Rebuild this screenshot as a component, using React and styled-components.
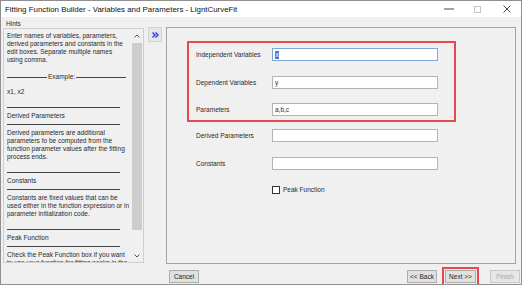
import React from 'react';
import styled, { createGlobalStyle } from 'styled-components';

const Global = createGlobalStyle`
  html, body { margin: 0; padding: 0; background: #fff; }
  body { font-family: "Liberation Sans", Arial, sans-serif; }
  * { box-sizing: border-box; }
`;

const FS = 6.5;

const Window = styled.div`
  width: 522px;
  height: 285px;
  border: 1px solid #8f8f8f;
  background: #f0f0f0;
  display: flex;
  flex-direction: column;
  overflow: hidden;
  color: #2a2a2a;
`;

const TitleBar = styled.div`
  height: 16px;
  flex: none;
  background: #fff;
  display: flex;
  align-items: center;
  padding-left: 4px;
`;

const Title = styled.div`
  flex: 1;
  font-size: 7.9px;
  white-space: nowrap;
  color: #111;
`;

const Controls = styled.div`
  display: flex;
  height: 100%;
`;

const Ctrl = styled.div`
  width: 29px;
  height: 100%;
  display: flex;
  align-items: center;
  justify-content: center;
`;

const Main = styled.div`
  flex: 1;
  min-height: 0;
  display: flex;
  align-items: flex-start;
  padding-left: 2px;
`;

const HintsCol = styled.div`
  width: 141px;
  display: flex;
  flex-direction: column;
`;

const HintsLabel = styled.div`
  height: 11px;
  padding: 2px 0 0 3px;
  font-size: ${FS}px;
  line-height: 10px;
`;

const HintsPanel = styled.div`
  height: 235px;
  border: 1px solid #cfcfcf;
  display: flex;
`;

const HintsText = styled.div`
  flex: 1;
  min-width: 0;
  overflow: hidden;
  padding: 3px 0 0 3px;
  font-size: ${FS}px;
  line-height: 8px;
`;

const Line = styled.div`
  white-space: nowrap;
  height: 8px;
`;

const Para = styled.div`
  margin-top: ${p => p.$mt || 0}px;
`;

const Sep = styled.div`
  width: 113px;
  height: 1px;
  background: #444;
  margin-top: ${p => p.$mt || 0}px;
`;

const ExampleRow = styled.div`
  display: flex;
  align-items: center;
  height: 8px;
  margin-top: 9px;
  white-space: nowrap;
`;

const ExampleRule = styled.div`
  width: ${p => p.$w}px;
  height: 1px;
  background: #444;
`;

const ExampleText = styled.span`
  padding: 0 1px 0 1px;
`;

const ScrollBar = styled.div`
  width: 13px;
  display: flex;
  flex-direction: column;
`;

const ScrollArrow = styled.div`
  height: 13px;
  display: flex;
  align-items: center;
  justify-content: center;
  padding-left: 1px;
`;

const ScrollTrack = styled.div`
  flex: 1;
  padding: 1px 1px 0 2px;
`;

const Thumb = styled.div`
  height: 187px;
  background: #cdcdcd;
`;

const ExpandButton = styled.div`
  margin: 10px 0 0 4px;
  width: 14px;
  height: 15px;
  background: #e6e6e6;
  border: 1px solid #d2d2d2;
  display: flex;
  align-items: center;
  justify-content: center;
`;

const RightPanel = styled.div`
  margin: 10px 0 0 4px;
  width: 350px;
  height: 237px;
  border: 1px solid #a3a3a3;
  padding: 13px 0 0 20px;
`;

const RedBox = styled.div`
  width: 269px;
  height: 81px;
  border: 2px solid #ea4850;
  padding: 5px 0 0 7px;
  display: flex;
  flex-direction: column;
  gap: 14.5px;
`;

const Rows = styled.div`
  padding-left: 9px;
  margin-top: 7px;
  display: flex;
  flex-direction: column;
  gap: 15px;
`;

const Row = styled.div`
  display: flex;
  align-items: center;
  height: 13px;
  font-size: ${FS}px;
`;

const Label = styled.div`
  width: 76px;
  white-space: nowrap;
`;

const Field = styled.div`
  width: 166px;
  height: 13px;
  background: #fff;
  border: 1px solid ${p => (p.$focus ? '#7ea8d8' : '#b4b4b4')};
  display: flex;
  align-items: center;
  padding-left: 2px;
  font-size: ${FS}px;
  white-space: nowrap;
`;

const Selected = styled.span`
  background: #3b7fd4;
  color: #fff;
  padding: 0 0.5px;
  line-height: 8px;
`;

const CheckRow = styled.div`
  display: flex;
  align-items: center;
  height: 9px;
  padding-left: 76px;
  font-size: ${FS}px;
`;

const CheckBox = styled.div`
  width: 8px;
  height: 8px;
  background: #fff;
  border: 1px solid #333;
  margin-right: 3px;
`;

const BottomRow = styled.div`
  height: 20px;
  flex: none;
  display: flex;
  align-items: flex-start;
  padding: 6px 1px 0 168px;
`;

const Spacer = styled.div`
  flex: 1;
`;

const Button = styled.button`
  width: ${p => p.$w || 30}px;
  height: 13px;
  margin-left: ${p => p.$ml || 0}px;
  padding: 0;
  border: 1px solid ${p => (p.disabled ? '#c9c9c9' : '#adadad')};
  background: ${p => (p.disabled ? '#e6e6e6' : '#e1e1e1')};
  color: ${p => (p.disabled ? '#a8a8a8' : '#1e1e1e')};
  font-family: inherit;
  font-size: ${FS}px;
  white-space: nowrap;
  outline: ${p => (p.$highlight ? '2px solid #ea4850' : 'none')};
  outline-offset: 1px;
`;

const Chevron = ({ up }) => (
  <svg width="6" height="4" viewBox="0 0 6 4">
    <polyline
      points={up ? '0.5,3.5 3,1 5.5,3.5' : '0.5,0.5 3,3 5.5,0.5'}
      fill="none"
      stroke="#555"
      strokeWidth="1"
    />
  </svg>
);

const Section = ({ title, lines }) => (
  <>
    <Sep $mt={11} />
    <Para $mt={4}>
      <Line>{title}</Line>
    </Para>
    <Sep $mt={4} />
    <Para $mt={4}>
      {lines.map(l => (
        <Line key={l}>{l}</Line>
      ))}
    </Para>
  </>
);

export default function App() {
  return (
    <>
      <Global />
      <Window>
        <TitleBar>
          <Title>Fitting Function Builder - Variables and Parameters - LigntCurveFit</Title>
          <Controls>
            <Ctrl>
              <svg width="10" height="2" viewBox="0 0 10 2">
                <line x1="0" y1="1" x2="10" y2="1" stroke="#444" strokeWidth="1" />
              </svg>
            </Ctrl>
            <Ctrl>
              <svg width="7" height="7" viewBox="0 0 7 7">
                <rect x="0.5" y="0.5" width="6" height="6" fill="none" stroke="#c4c4c4" strokeWidth="1" />
              </svg>
            </Ctrl>
            <Ctrl>
              <svg width="8" height="8" viewBox="0 0 8 8">
                <path d="M0.5 0.5 L7.5 7.5 M7.5 0.5 L0.5 7.5" stroke="#333" strokeWidth="0.9" fill="none" />
              </svg>
            </Ctrl>
          </Controls>
        </TitleBar>

        <Main>
          <HintsCol>
            <HintsLabel>Hints</HintsLabel>
            <HintsPanel>
              <HintsText>
                <Para>
                  <Line>Enter names of variables, parameters,</Line>
                  <Line>derived parameters and constants in the</Line>
                  <Line>edit boxes. Separate multiple names</Line>
                  <Line>using comma.</Line>
                </Para>
                <ExampleRow>
                  <ExampleRule $w={40} />
                  <ExampleText>Example:</ExampleText>
                  <ExampleRule $w={50} />
                </ExampleRow>
                <Para $mt={7}>
                  <Line>x1, x2</Line>
                </Para>
                <Section
                  title="Derived Parameters"
                  lines={[
                    'Derived parameters are additional',
                    'parameters to be computed from the',
                    'function parameter values after the fitting',
                    'process ends.',
                  ]}
                />
                <Section
                  title="Constants"
                  lines={[
                    'Constants are fixed values that can be',
                    'used either in the function expression or in',
                    'parameter initialization code.',
                  ]}
                />
                <Section
                  title="Peak Function"
                  lines={[
                    'Check the Peak Function box if you want',
                    'to use your function for fitting peaks in the',
                  ]}
                />
              </HintsText>
              <ScrollBar>
                <ScrollArrow>
                  <Chevron up />
                </ScrollArrow>
                <ScrollTrack>
                  <Thumb />
                </ScrollTrack>
                <ScrollArrow>
                  <Chevron />
                </ScrollArrow>
              </ScrollBar>
            </HintsPanel>
          </HintsCol>

          <ExpandButton>
            <svg width="7" height="6" viewBox="0 0 7 6">
              <path d="M0.5 0.5 L3 3 L0.5 5.5 M3.5 0.5 L6 3 L3.5 5.5" fill="none" stroke="#3434f0" strokeWidth="1.4" />
            </svg>
          </ExpandButton>

          <RightPanel>
            <RedBox>
              <Row>
                <Label>Independent Variables</Label>
                <Field $focus>
                  <Selected>x</Selected>
                </Field>
              </Row>
              <Row>
                <Label>Dependent Variables</Label>
                <Field>y</Field>
              </Row>
              <Row>
                <Label>Parameters</Label>
                <Field>a,b,c</Field>
              </Row>
            </RedBox>
            <Rows>
              <Row>
                <Label>Derived Parameters</Label>
                <Field />
              </Row>
              <Row>
                <Label>Constants</Label>
                <Field />
              </Row>
              <CheckRow>
                <CheckBox />
                Peak Function
              </CheckRow>
            </Rows>
          </RightPanel>
        </Main>

        <BottomRow>
          <Button>Cancel</Button>
          <Spacer />
          <Button>&lt;&lt; Back</Button>
          <Button $w={31} $ml={8} $highlight>
            Next &gt;&gt;
          </Button>
          <Button $ml={14} disabled>
            Finish
          </Button>
        </BottomRow>
      </Window>
    </>
  );
}
